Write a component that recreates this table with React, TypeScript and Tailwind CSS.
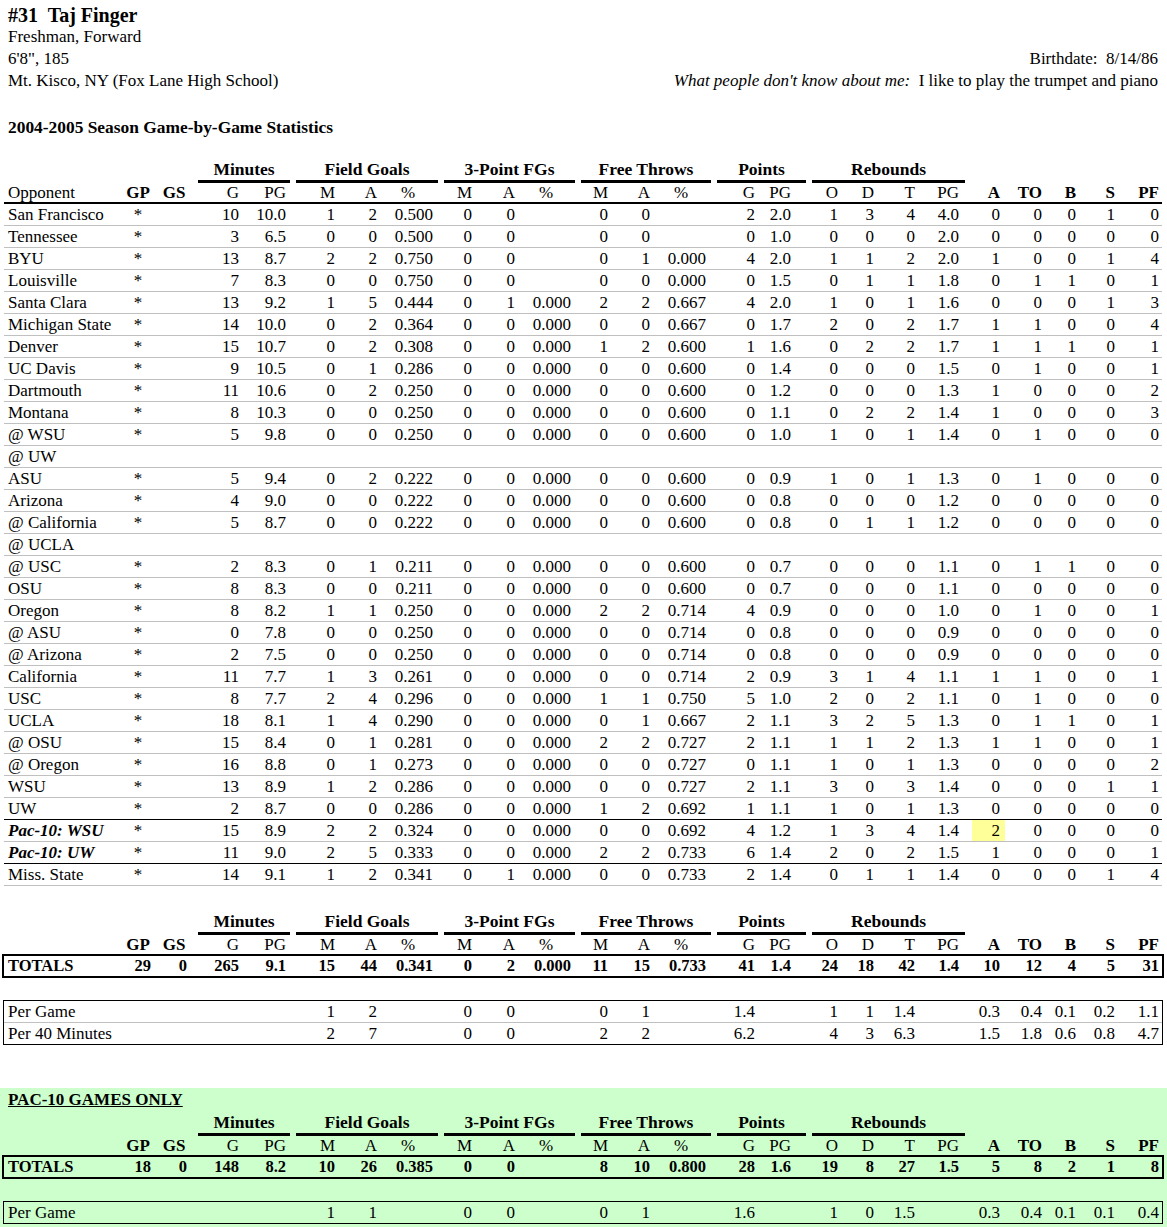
import React from "react";

// column template shared by every stats block (Opponent, GP, GS, Minutes x2, FG x3, 3P x3, FT x3, Points x2, Reb x4, A, TO, B, S, PF)
const GRID =
  "grid grid-cols-[116px_36px_36px_50px_47px_49px_42px_56px_39px_43px_56px_37px_42px_56px_49px_36px_47px_36px_41px_54px_33px_40px_34px_39px_44px]";

const R = "pr-[3px] text-right";
const ALIGN = [
  "pl-[4px] text-left whitespace-nowrap",
  "text-center",
  "text-center",
  R, R,
  R, R, R,
  R, R, R,
  R, R, R,
  R, R,
  R, R, R,
  "pr-[13px] text-right",
  "pr-[5px] text-right",
  R, R, R, R,
];

const HEAD = ["Opponent", "GP", "GS", "G", "PG", "M", "A", "%", "M", "A", "%", "M", "A", "%", "G", "PG", "O", "D", "T", "PG", "A", "TO", "B", "S", "PF"];
const BOLD_HEAD = [1, 2, 20, 21, 22, 23, 24];
const PCT = [7, 10, 13];

const GROUPS = [
  { label: "Minutes", w: "w-[92px]" },
  { label: "Field Goals", w: "w-[142px]" },
  { label: "3-Point FGs", w: "w-[131px]" },
  { label: "Free Throws", w: "w-[130px]" },
  { label: "Points", w: "w-[89px]" },
  { label: "Rebounds", w: "w-[153px]" },
];

const vals = (s: string) => s.split(" ").map((v) => (v === "-" ? "" : v));
const game = (name: string, s?: string) => (s ? [name, "*", "", ...vals(s)] : [name]);

const games: string[][] = [
  game("San Francisco", "10 10.0 1 2 0.500 0 0 - 0 0 - 2 2.0 1 3 4 4.0 0 0 0 1 0"),
  game("Tennessee", "3 6.5 0 0 0.500 0 0 - 0 0 - 0 1.0 0 0 0 2.0 0 0 0 0 0"),
  game("BYU", "13 8.7 2 2 0.750 0 0 - 0 1 0.000 4 2.0 1 1 2 2.0 1 0 0 1 4"),
  game("Louisville", "7 8.3 0 0 0.750 0 0 - 0 0 0.000 0 1.5 0 1 1 1.8 0 1 1 0 1"),
  game("Santa Clara", "13 9.2 1 5 0.444 0 1 0.000 2 2 0.667 4 2.0 1 0 1 1.6 0 0 0 1 3"),
  game("Michigan State", "14 10.0 0 2 0.364 0 0 0.000 0 0 0.667 0 1.7 2 0 2 1.7 1 1 0 0 4"),
  game("Denver", "15 10.7 0 2 0.308 0 0 0.000 1 2 0.600 1 1.6 0 2 2 1.7 1 1 1 0 1"),
  game("UC Davis", "9 10.5 0 1 0.286 0 0 0.000 0 0 0.600 0 1.4 0 0 0 1.5 0 1 0 0 1"),
  game("Dartmouth", "11 10.6 0 2 0.250 0 0 0.000 0 0 0.600 0 1.2 0 0 0 1.3 1 0 0 0 2"),
  game("Montana", "8 10.3 0 0 0.250 0 0 0.000 0 0 0.600 0 1.1 0 2 2 1.4 1 0 0 0 3"),
  game("@ WSU", "5 9.8 0 0 0.250 0 0 0.000 0 0 0.600 0 1.0 1 0 1 1.4 0 1 0 0 0"),
  game("@ UW"),
  game("ASU", "5 9.4 0 2 0.222 0 0 0.000 0 0 0.600 0 0.9 1 0 1 1.3 0 1 0 0 0"),
  game("Arizona", "4 9.0 0 0 0.222 0 0 0.000 0 0 0.600 0 0.8 0 0 0 1.2 0 0 0 0 0"),
  game("@ California", "5 8.7 0 0 0.222 0 0 0.000 0 0 0.600 0 0.8 0 1 1 1.2 0 0 0 0 0"),
  game("@ UCLA"),
  game("@ USC", "2 8.3 0 1 0.211 0 0 0.000 0 0 0.600 0 0.7 0 0 0 1.1 0 1 1 0 0"),
  game("OSU", "8 8.3 0 0 0.211 0 0 0.000 0 0 0.600 0 0.7 0 0 0 1.1 0 0 0 0 0"),
  game("Oregon", "8 8.2 1 1 0.250 0 0 0.000 2 2 0.714 4 0.9 0 0 0 1.0 0 1 0 0 1"),
  game("@ ASU", "0 7.8 0 0 0.250 0 0 0.000 0 0 0.714 0 0.8 0 0 0 0.9 0 0 0 0 0"),
  game("@ Arizona", "2 7.5 0 0 0.250 0 0 0.000 0 0 0.714 0 0.8 0 0 0 0.9 0 0 0 0 0"),
  game("California", "11 7.7 1 3 0.261 0 0 0.000 0 0 0.714 2 0.9 3 1 4 1.1 1 1 0 0 1"),
  game("USC", "8 7.7 2 4 0.296 0 0 0.000 1 1 0.750 5 1.0 2 0 2 1.1 0 1 0 0 0"),
  game("UCLA", "18 8.1 1 4 0.290 0 0 0.000 0 1 0.667 2 1.1 3 2 5 1.3 0 1 1 0 1"),
  game("@ OSU", "15 8.4 0 1 0.281 0 0 0.000 2 2 0.727 2 1.1 1 1 2 1.3 1 1 0 0 1"),
  game("@ Oregon", "16 8.8 0 1 0.273 0 0 0.000 0 0 0.727 0 1.1 1 0 1 1.3 0 0 0 0 2"),
  game("WSU", "13 8.9 1 2 0.286 0 0 0.000 0 0 0.727 2 1.1 3 0 3 1.4 0 0 0 1 1"),
  game("UW", "2 8.7 0 0 0.286 0 0 0.000 1 2 0.692 1 1.1 1 0 1 1.3 0 0 0 0 0"),
  game("Pac-10: WSU", "15 8.9 2 2 0.324 0 0 0.000 0 0 0.692 4 1.2 1 3 4 1.4 2 0 0 0 0"),
  game("Pac-10: UW", "11 9.0 2 5 0.333 0 0 0.000 2 2 0.733 6 1.4 2 0 2 1.5 1 0 0 0 1"),
  game("Miss. State", "14 9.1 1 2 0.341 0 1 0.000 0 0 0.733 2 1.4 0 1 1 1.4 0 0 0 1 4"),
];

const season = {
  totals: ["TOTALS", ...vals("29 0 265 9.1 15 44 0.341 0 2 0.000 11 15 0.733 41 1.4 24 18 42 1.4 10 12 4 5 31")],
  avgs: [
    ["Per Game", ...vals("- - - - 1 2 - 0 0 - 0 1 - 1.4 - 1 1 1.4 - 0.3 0.4 0.1 0.2 1.1")],
    ["Per 40 Minutes", ...vals("- - - - 2 7 - 0 0 - 2 2 - 6.2 - 4 3 6.3 - 1.5 1.8 0.6 0.8 4.7")],
  ],
};

const pac10 = {
  totals: ["TOTALS", ...vals("18 0 148 8.2 10 26 0.385 0 0 - 8 10 0.800 28 1.6 19 8 27 1.5 5 8 2 1 8")],
  avgs: [["Per Game", ...vals("- - - - 1 1 - 0 0 - 0 1 - 1.6 - 1 0 1.5 - 0.3 0.4 0.1 0.1 0.4")]],
};

const GroupRow = () => (
  <div className="flex h-[25px] gap-[6px] pl-[194px]">
    {GROUPS.map((g) => (
      <div key={g.label} className={`${g.w} whitespace-nowrap border-b-[3px] border-black text-center text-[17.5px] font-bold leading-[22px]`}>
        {g.label}
      </div>
    ))}
  </div>
);

const HeadRow = ({ first, ruled }: { first: string; ruled?: boolean }) => (
  <div className={`${GRID} ${ruled ? "h-[21px] border-b-2 border-black" : "h-[19px]"} leading-[19px]`}>
    {HEAD.map((h, i) => (
      <div key={i} className={`${PCT.includes(i) ? "text-center" : ALIGN[i]} ${BOLD_HEAD.includes(i) ? "font-bold" : ""}`}>
        {i === 0 ? first : h}
      </div>
    ))}
  </div>
);

const GameRow = ({ row, idx }: { row: string[]; idx: number }) => {
  const dark = idx === 27 || idx === 29;
  const pac = row[0].startsWith("Pac-10");
  return (
    <div className={`${GRID} h-[22px] border-b ${dark ? "border-black" : "border-[#c0c0c0]"} leading-[21px]`}>
      {Array.from({ length: 25 }).map((_, i) => (
        <div
          key={i}
          className={`${ALIGN[i]} ${i === 0 && pac ? "font-bold italic" : ""} ${idx === 28 && i === 20 ? "bg-[#ffff99]" : ""}`}
        >
          {row[i] ?? ""}
        </div>
      ))}
    </div>
  );
};

const TotalsBox = ({ row }: { row: string[] }) => (
  <div className={`${GRID} -mx-[2px] h-[24px] border-2 border-black text-[16.5px] font-bold leading-[20px]`}>
    {row.map((v, i) => (
      <div key={i} className={i === 1 || i === 2 ? "pr-[5px] text-right" : ALIGN[i]}>
        {v}
      </div>
    ))}
  </div>
);

const AvgBox = ({ rows }: { rows: string[][] }) => (
  <div className="-mx-[1px] border border-black">
    {rows.map((r, ri) => (
      <div key={ri} className={`${GRID} h-[21px] leading-[21px] ${ri < rows.length - 1 ? "h-[22px] border-b border-[#c0c0c0]" : ""}`}>
        {r.map((v, i) => (
          <div key={i} className={ALIGN[i]}>
            {v}
          </div>
        ))}
      </div>
    ))}
  </div>
);

const Summary = ({ data }: { data: { totals: string[]; avgs: string[][] } }) => (
  <div className="ml-[4px] w-[1158px]">
    <GroupRow />
    <HeadRow first="" />
    <TotalsBox row={data.totals} />
    <div className="mt-[22px]">
      <AvgBox rows={data.avgs} />
    </div>
  </div>
);

export default function App() {
  return (
    <div className="min-h-screen w-full bg-white pt-[4px] font-['Liberation_Serif','Times_New_Roman',serif] text-[17px] text-black">
      {/* player header */}
      <div className="pl-[8px] pr-[9px]">
        <div className="text-[20px] font-bold leading-[22px]">#31&nbsp; Taj Finger</div>
        <div className="leading-[22px]">Freshman, Forward</div>
        <div className="flex justify-between leading-[22px]">
          <span>6'8", 185</span>
          <span>Birthdate:&nbsp; 8/14/86</span>
        </div>
        <div className="flex justify-between leading-[22px]">
          <span>Mt. Kisco, NY (Fox Lane High School)</span>
          <span>
            <i>What people don't know about me:</i>&nbsp; I like to play the trumpet and piano
          </span>
        </div>
        <div className="mt-[24px] text-[17.4px] font-bold leading-[22px]">2004-2005 Season Game-by-Game Statistics</div>
      </div>

      {/* game-by-game */}
      <div className="ml-[4px] mt-[20px] w-[1158px]">
        <GroupRow />
        <HeadRow first="Opponent" ruled />
        {games.map((g, i) => (
          <GameRow key={i} row={g} idx={i} />
        ))}
      </div>

      <div className="mt-[24px]">
        <Summary data={season} />
      </div>

      {/* pac-10 only */}
      <div className="mt-[43px] bg-[#ccffcc] pb-[12px] pt-[1px]">
        <div className="pl-[8px] font-bold leading-[22px] underline">PAC-10 GAMES ONLY</div>
        <Summary data={pac10} />
      </div>
    </div>
  );
}
